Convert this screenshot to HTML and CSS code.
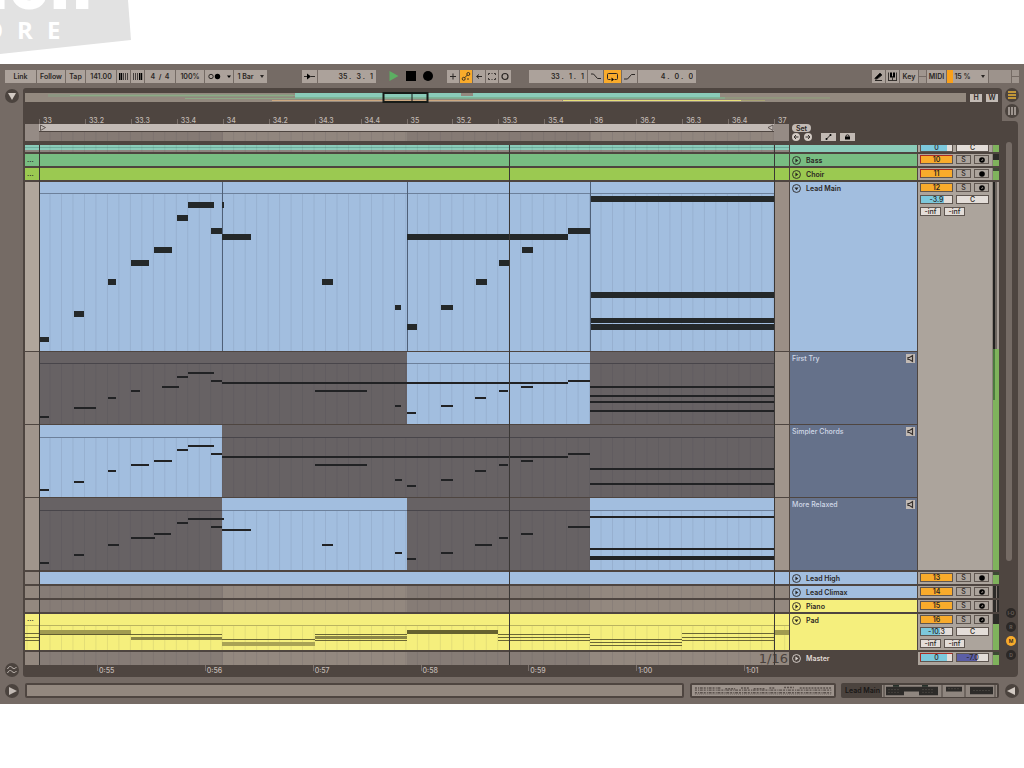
FILE: index.html
```html
<!DOCTYPE html>
<html lang="en">
<head>
<meta charset="utf-8">
<title>Arrangement</title>
<link rel="stylesheet" href="styles.css">
</head>
<body>
<svg class="defs" aria-hidden="true">
  <defs>
    <pattern id="grid" x="39" y="0" width="11.48" height="20" patternUnits="userSpaceOnUse"><rect x="10.7" width=".7" height="20" fill="#1d2433" opacity=".12"/></pattern>
    <symbol id="fold" viewBox="0 0 10 10"><circle cx="5" cy="5" r="4.4" fill="none" stroke="currentColor" stroke-width="1"/><path d="M3.800 2.700l3.200 2.300-3.200 2.300z" fill="currentColor"/></symbol>
    <symbol id="unfold" viewBox="0 0 10 10"><circle cx="5" cy="5" r="4.4" fill="none" stroke="currentColor" stroke-width="1"/><path d="M2.700 3.800h4.600L5 7z" fill="currentColor"/></symbol>
    <symbol id="rec" viewBox="0 0 8 8"><circle cx="4" cy="4" r="2.8"/></symbol>
    <symbol id="midi" viewBox="0 0 8 8"><circle cx="4" cy="4" r="2.8"/><path d="M3 4.800l1.700-1.600v1.600" stroke="#aca49c" stroke-width=".7" fill="none"/></symbol>
    <symbol id="spk" viewBox="0 0 9 9"><path d="M2 3.500h1.500L6.500 1.500v6L3.500 5.500H2z" fill="none" stroke="#38322f" stroke-width="1.200"/></symbol>
  </defs>
</svg>

<header class="brand">
  <svg class="brand-shape" viewBox="0 0 131 54" aria-hidden="true"><path d="M0 0h128l3 40L0 54z" fill="#e2e2e2"/></svg>
  <span class="brand-name">ion</span>
  <span class="brand-sub"><span>O</span><span>R</span><span>E</span></span>
</header>

<main class="app">
  <div class="toolbar">
    <div class="group">
      <button class="w31">Link</button><button class="w28">Follow</button><button class="w19">Tap</button>
      <input class="w29" aria-label="Tempo" value="141.00">
      <button class="w13" aria-label="Nudge down"><svg viewBox="0 0 13 13"><path d="M6.500 3v7M8.500 3v7M10.500 3v7" stroke="#2a2624" stroke-width=".8"/><path d="M2 3h1.500v7H2zM4 3h1.200v7H4z"/></svg></button>
      <button class="w13" aria-label="Nudge up"><svg viewBox="0 0 13 13"><path d="M2.500 3v7M4.500 3v7M6.500 3v7" stroke="#2a2624" stroke-width=".8"/><path d="M8 3h1.200v7H8zM9.700 3h1.500v7H9.700z"/></svg></button>
      <input class="w29" aria-label="Time signature" value="4  /  4"><button class="w28">100%</button>
      <button class="w28" aria-label="Metronome"><svg viewBox="0 0 28 13"><circle cx="6" cy="6.500" r="2.200" fill="none" stroke="#2a2624"/><circle cx="12.500" cy="6.500" r="2.700"/><path d="M22 5.500h4l-2 2.500z"/></svg></button>
      <button class="w33">1 Bar <i class="caret"></i></button>
    </div>
    <div class="group g-position">
      <button class="w15" aria-label="Follow song"><svg viewBox="0 0 15 13"><path d="M2 6.500h4M9 6.500h4" stroke="#2a2624"/><path d="M5 3.500l4 3-4 3z"/></svg></button>
      <input class="w58 pos" aria-label="Position" value="35 .   3 .   1">
    </div>
    <div class="transport">
      <button aria-label="Play"><svg viewBox="0 0 12 12"><path d="M1.500 1l9 5-9 5z" fill="#5cae62"/></svg></button>
      <button aria-label="Stop"><svg viewBox="0 0 12 12"><path d="M1 1h10v10H1z"/></svg></button>
      <button aria-label="Record"><svg viewBox="0 0 12 12"><circle cx="6" cy="6" r="5"/></svg></button>
    </div>
    <div class="group">
      <button class="w12" aria-label="Overdub"><svg viewBox="0 0 12 13"><path d="M3 6.500h6M6 3.500v6" stroke="#2a2624"/></svg></button>
      <button class="w12 on" aria-label="Automation arm"><svg viewBox="0 0 12 13"><g fill="none" stroke="#2a2624" stroke-width=".9"><circle cx="3.700" cy="8.800" r="1.500"/><circle cx="8.300" cy="4" r="1.500"/><path d="M4.800 7.700l2.400-2.600M7 9h2"/></g></svg></button>
      <button class="w12" aria-label="Re-enable automation"><svg viewBox="0 0 12 13"><path d="M4 6.500h5M6 4.500l-2.500 2L6 8.500" stroke="#2a2624" fill="none"/></svg></button>
      <button class="w12" aria-label="Capture"><svg viewBox="0 0 12 13"><path d="M2.500 5V3.500H4M8 3.500h1.500V5M9.500 8v1.500H8M4 9.500H2.500V8M5.500 3.500h1M5.500 9.500h1" stroke="#2a2624" fill="none" stroke-width=".9"/></svg></button>
      <button class="w12" aria-label="Session record"><svg viewBox="0 0 12 13"><circle cx="6" cy="6.500" r="3" fill="none" stroke="#2a2624" stroke-width="1.200"/></svg></button>
    </div>
    <div class="group g-loop">
      <input class="w58 pos" aria-label="Loop start" value="33 .   1 .   1">
      <button class="w15" aria-label="Punch in"><svg viewBox="0 0 15 13"><path d="M3 4h2.500l4 4.500H13" stroke="#2a2624" fill="none"/></svg></button>
      <button class="w16 on" aria-label="Loop"><svg viewBox="0 0 16 13"><path d="M6 9.500H4a1 1 0 0 1-1-1v-4a1 1 0 0 1 1-1h8a1 1 0 0 1 1 1v4a1 1 0 0 1-1 1h-2" stroke="#2a2624" fill="none"/><path d="M7 7.500v4l2.500-2z"/></svg></button>
      <button class="w15" aria-label="Punch out"><svg viewBox="0 0 15 13"><path d="M2 9h3.500l4-4.500H13" stroke="#2a2624" fill="none"/></svg></button>
      <input class="w58 pos" aria-label="Loop length" value="4 .   0 .   0">
    </div>
    <div class="group g-right">
      <button class="w13" aria-label="Draw mode"><svg viewBox="0 0 13 13"><path d="M3 8l5-5 2 2-5 4H3zM3 10.500h7" stroke="#2a2624"/></svg></button>
      <button class="w13" aria-label="Computer keyboard"><svg viewBox="0 0 13 13"><path d="M2.500 2.500v8M6.500 6v4.500M10.500 2.500v8M2 10.500h9" stroke="#2a2624" stroke-width=".9"/><path d="M4 2.500h2v5H4zM7 2.500h2v5H7z"/></svg></button>
      <button class="w17">Key</button>
      <span class="leds"><i></i><i></i></span>
      <button class="w19">MIDI</button><button class="w41 cpu">15 % <i class="caret"></i></button>
      <span class="disk"></span><span class="leds"><i></i><i></i></span>
    </div>
  </div>

  <div class="body">
    <aside class="rail">
      <button class="round" aria-label="Show browser"><svg viewBox="0 0 14 14"><path d="M3 4h8l-4 7z" fill="#d2cac3"/></svg></button>
      <button class="round" aria-label="Groove pool"><svg viewBox="0 0 14 14"><path d="M2.500 6c1.500-3 3-3 4.500-1.500S10 6 11.500 4M2.500 10c1.500-3 3-3 4.500-1.500S10 10 11.500 8" fill="none" stroke="#c2bab4"/></svg></button>
    </aside>

    <section class="panel">
      <div class="overview">
        <svg class="overview-map" viewBox="25 92 941 11" preserveAspectRatio="none" aria-hidden="true">
          <path d="M25 93h941v9H25z" fill="#93897f"/>
          <path d="M48 94h245v3H48z" fill="#8d9682"/><path d="M70 95.500h225M185 98.500h110" stroke="#8cab86"/>
          <path d="M295 93h425v4.500H295z" fill="#8acbb9"/><path d="M461 93h12v3h-12z" fill="#93897f"/>
          <path d="M295 98h430" stroke="#79b999" stroke-width="1.500"/><path d="M272 100.500h290" stroke="#cda981"/><path d="M563 100.500h178" stroke="#e8e079"/>
          <path d="M720 98h110" stroke="#8fa27c"/><path d="M741 100.500h24" stroke="#a9a474"/>
          <path d="M383.500 93h44v9h-44z" fill="none" stroke="#171b18" stroke-width="2"/><path d="M412 92v10" stroke="#171b18"/>
        </svg>
        <button>H</button><button>W</button>
      </div>

      <div class="timeline">
        <div class="ruler">
          <span>33</span><span>33.2</span><span>33.3</span><span>33.4</span><span>34</span><span>34.2</span><span>34.3</span><span>34.4</span><span>35</span><span>35.2</span><span>35.3</span><span>35.4</span><span>36</span><span>36.2</span><span>36.3</span><span>36.4</span><span>37</span>
        </div>
        <div class="scrub">
          <svg viewBox="25 124 764 17" preserveAspectRatio="none" aria-hidden="true">
            <path d="M25 124h764v17H25z" fill="#958b85"/>
            <path d="M39 132h184v9H39zM407 132h184v9H407z" fill="#857a74"/><path d="M223 132h184v9H223zM591 132h183v9H591z" fill="#91867e"/>
            <path d="M39 124h735v7H39z" fill="#c2bab5"/><path d="M39 131.500h735" stroke="#4e4540"/>
            <path d="M39 132h735v9H39z" fill="url(#grid)"/>
            <path d="M40.500 125l5 2.500-5 3zM773 125l-5 2.500 5 3z" fill="none" stroke="#4b433f" stroke-width=".8"/>
          </svg>
        </div>
        <div class="locators">
          <button class="set">Set</button>
          <div class="loc-row">
            <button class="dot" aria-label="Previous locator"><svg viewBox="0 0 8 8"><path d="M6.500 4H2M4 2L2 4l2 2" stroke="#38322f" fill="none"/></svg></button>
            <button class="dot" aria-label="Next locator"><svg viewBox="0 0 8 8"><path d="M1.500 4H6M4 2l2 2-2 2" stroke="#38322f" fill="none"/></svg></button>
            <button class="mini" aria-label="Automation mode"><svg viewBox="0 0 14 8"><path d="M5 6l4-4" stroke="#2a2624"/><circle cx="5" cy="6" r="1"/><circle cx="9" cy="2" r="1"/></svg></button>
            <button class="mini" aria-label="Lock envelopes"><svg viewBox="0 0 14 8"><path d="M4.500 3.500h5v3h-5z"/><path d="M5.500 4V2.500q1.500-1.500 3 0V4" fill="none" stroke="#2a2624"/></svg></button>
          </div>
        </div>
      </div>

      <div class="tracks">
        <div class="track cut">
          <svg class="lane" viewBox="25 145 764 7" preserveAspectRatio="none"><path d="M25 145h764v7H25z" fill="#8d857f"/><path d="M25 145h764v5H25z" fill="#8acbb9"/><path d="M25 147.500h764" stroke="#6fae9d"/><path d="M39 145h735v7H39z" fill="url(#grid)"/></svg>
          <div class="head aqua"></div>
          <div class="mixer"><div class="controls"><div class="strip"><output class="vol v88">0</output><output class="pan">C</output></div></div><div class="meter"></div></div>
        </div>

        <div class="track">
          <div class="lane clip bass">...</div>
          <div class="head bass"><button class="tog" aria-label="Unfold Bass"><svg><use href="#fold"/></svg></button>Bass</div>
          <div class="mixer"><div class="controls"><div class="strip"><button class="num auto">10</button><button class="sq">S</button><button class="sq" aria-label="Arm"><svg><use href="#midi"/></svg></button></div></div><div class="meter half"></div></div>
        </div>
        <div class="track">
          <div class="lane clip choir">...</div>
          <div class="head choir"><button class="tog" aria-label="Unfold Choir"><svg><use href="#fold"/></svg></button>Choir</div>
          <div class="mixer"><div class="controls"><div class="strip"><button class="num auto">11</button><button class="sq">S</button><button class="sq" aria-label="Arm"><svg><use href="#rec"/></svg></button></div></div><div class="meter green"></div></div>
        </div>

        <div class="track comp">
          <svg class="lane" viewBox="25 182 764 169" preserveAspectRatio="none">
            <path d="M25 182h764v169H25z" fill="#b0a69c"/><path d="M774 182h15v169h-15z" fill="#9b8f86"/>
            <path d="M39 182h735v169H39z" fill="#a2bedf"/><path d="M39 194h735v157H39z" fill="url(#grid)"/>
            <path d="M39 193.500h735" stroke="#6c809b"/><path d="M222.500 182v169M407.500 182v169M590.500 182v169" stroke="#4f6078"/>
            <path d="M39 339.500h10M74 314h10M108 282h8M131 263h18M154 250h18M177 218h11M188 205h26M211 231h11M222 205h2M222 237h29M322 282h11M395 307.500h6M407 327h10M407 237h161M568 231h22M441 307.500h12M476 282h11M499 263h10M522 250h11M591 199h183M591 295h183M591 320.500h183M591 327h183" stroke="#242829" stroke-width="5.500"/>
          </svg>
          <div class="head blue"><button class="tog" aria-label="Fold Lead Main"><svg><use href="#unfold"/></svg></button>Lead Main</div>
          <svg class="lane" viewBox="25 352 764 72" preserveAspectRatio="none">
            <path d="M25 352h764v72H25z" fill="#a0958c"/><path d="M39 352h735v72H39z" fill="#676264"/><path d="M407 352h183v72H407z" fill="#a2bedf"/>
            <path d="M39 364h735v60H39z" fill="url(#grid)"/><path d="M39 363.500h368M590 363.500h184" stroke="#48454a"/><path d="M407 363.500h183" stroke="#6c809b"/>
            <path d="M39 417h10M74 408h22M108 398h8M131 391h9M162 387h17M177 377h11M188 373h26M211 381h11M222 383h346M315 391h52M395 406h6M407 413h9M441 406h12M475 398h11M499 391h9M521 387h12M568 381h22M590 387h184M590 396h184M590 402h184M590 411h184" stroke="#212224" stroke-width="2"/>
          </svg>
          <div class="head take">First Try<button class="audition" aria-label="Audition First Try"><svg><use href="#spk"/></svg></button></div>
          <svg class="lane" viewBox="25 425 764 72" preserveAspectRatio="none">
            <path d="M25 425h764v72H25z" fill="#a0958c"/><path d="M39 425h735v72H39z" fill="#676264"/><path d="M39 425h183v72H39z" fill="#a2bedf"/>
            <path d="M39 438h735v59H39z" fill="url(#grid)"/><path d="M222 437.500h552" stroke="#48454a"/><path d="M39 437.500h183" stroke="#6c809b"/>
            <path d="M39 490h10M74 482h10M108 471h8M131 465h18M154 461h18M177 450h11M188 446h26M211 454h11M222 457h346M315 465h52M395 480h7M407 486h9M441 480h12M475 471h11M499 465h9M521 461h12M568 454h22M590 469h184M590 484h184" stroke="#212224" stroke-width="2"/>
          </svg>
          <div class="head take">Simpler Chords<button class="audition" aria-label="Audition Simpler Chords"><svg><use href="#spk"/></svg></button></div>
          <svg class="lane" viewBox="25 498 764 72" preserveAspectRatio="none">
            <path d="M25 498h764v72H25z" fill="#a0958c"/><path d="M39 498h735v72H39z" fill="#676264"/><path d="M222 498h185v72H222zM590 498h184v72H590z" fill="#a2bedf"/>
            <path d="M39 511h735v59H39z" fill="url(#grid)"/><path d="M39 510.500h183M407 510.500h183" stroke="#48454a"/><path d="M222 510.500h185M590 510.500h184" stroke="#6c809b"/>
            <path d="M39 563h10M74 555h10M108 545h11M131 538h24M154 534h17M177 523h11M188 519h36M211 527h11M222 530h29M322 545h11M395 553h7M407 559h9M441 553h12M475 545h17M499 538h9M521 534h12M568 527h22M590 517h184M590 549h184M590 557h184M590 559h184" stroke="#212224" stroke-width="2"/>
          </svg>
          <div class="head take">More Relaxed<button class="audition" aria-label="Audition More Relaxed"><svg><use href="#spk"/></svg></button></div>
          <div class="mixer"><div class="controls">
            <div class="strip"><button class="num">12</button><button class="sq">S</button><button class="sq" aria-label="Arm"><svg><use href="#midi"/></svg></button></div>
            <div class="strip"><output class="vol v72">-3.9</output><output class="pan">C</output></div>
            <div class="strip"><output class="send">-inf</output><output class="send">-inf</output></div>
          </div><div class="meter tall"></div></div>
        </div>

        <div class="track">
          <svg class="lane" viewBox="25 0 764 12" preserveAspectRatio="none"><path d="M25 0h764v12H25z" fill="#958b84"/><path d="M39 0h750v12H39z" fill="#a2bedf"/></svg>
          <div class="head blue"><button class="tog" aria-label="Unfold Lead High"><svg><use href="#fold"/></svg></button>Lead High</div>
          <div class="mixer"><div class="controls"><div class="strip"><button class="num">13</button><button class="sq">S</button><button class="sq" aria-label="Arm"><svg><use href="#rec"/></svg></button></div></div><div class="meter green"></div></div>
        </div>
        <div class="track">
          <svg class="lane" viewBox="25 0 764 12" preserveAspectRatio="none"><path d="M25 0h764v12H25z" fill="#93887f"/><path d="M39 0h184v12H39zM407 0h183v12H407z" fill="#867c76"/><path d="M39 0h735v12H39z" fill="url(#grid)"/></svg>
          <div class="head blue"><button class="tog" aria-label="Unfold Lead Climax"><svg><use href="#fold"/></svg></button>Lead Climax</div>
          <div class="mixer"><div class="controls"><div class="strip"><button class="num">14</button><button class="sq">S</button><button class="sq" aria-label="Arm"><svg><use href="#midi"/></svg></button></div></div><div class="meter off"></div></div>
        </div>
        <div class="track">
          <svg class="lane" viewBox="25 0 764 12" preserveAspectRatio="none"><path d="M25 0h764v12H25z" fill="#93887f"/><path d="M39 0h184v12H39zM407 0h183v12H407z" fill="#867c76"/><path d="M39 0h735v12H39z" fill="url(#grid)"/></svg>
          <div class="head yellow"><button class="tog" aria-label="Unfold Piano"><svg><use href="#fold"/></svg></button>Piano</div>
          <div class="mixer"><div class="controls"><div class="strip"><button class="num">15</button><button class="sq">S</button><button class="sq" aria-label="Arm"><svg><use href="#midi"/></svg></button></div></div><div class="meter off"></div></div>
        </div>
        <div class="track open">
          <div class="lane padlane">
            <svg viewBox="25 614 764 36" preserveAspectRatio="none">
              <path d="M25 614h764v36H25z" fill="#f5ef7d"/><path d="M25 626h764v24H25z" fill="url(#grid)"/><path d="M25 625.500h764" stroke="#b9b35f"/>
              <path d="M39 632.500h92M774 632.500h15" stroke="#a19b50" stroke-width="4.500"/><path d="M222 644h93" stroke="#a9a355" stroke-width="4"/><path d="M131 638.500h91M315 637.500h92" stroke="#8b8647" stroke-width="2.500"/><path d="M407 632h91" stroke="#66622f" stroke-width="4"/>
              <path d="M39 634.500h92M25 633.500h14M25 637.500h14M25 640.500h14M131 634.500h91M222 639.500h93M315 634.500h92M315 640.500h92M498 634.500h92M498 637.500h92M498 640.500h92M590 639.500h92M590 642.500h92M590 645.500h92M682 633.500h92M682 637.500h92M682 640.500h92" stroke="#5b572d" stroke-width=".9"/>
            </svg>
            <span class="cliptext">...</span>
          </div>
          <div class="head yellow"><button class="tog" aria-label="Fold Pad"><svg><use href="#unfold"/></svg></button>Pad</div>
          <div class="mixer"><div class="controls">
            <div class="strip"><button class="num">16</button><button class="sq">S</button><button class="sq" aria-label="Arm"><svg><use href="#midi"/></svg></button></div>
            <div class="strip"><output class="vol v60">-10.3</output><output class="pan">C</output></div>
            <div class="strip"><output class="send">-inf</output><output class="send">-inf</output></div>
          </div><div class="meter pad-meter"></div></div>
        </div>
        <div class="track">
          <div class="lane master-lane">
            <svg viewBox="25 0 764 13" preserveAspectRatio="none"><path d="M25 0h764v13H25z" fill="#93887f"/><path d="M39 0h184v13H39zM407 0h183v13H407z" fill="#867c76"/><path d="M39 0h735v13H39z" fill="url(#grid)"/></svg>
            <span class="gridsize">1/16</span>
          </div>
          <div class="head master"><button class="tog" aria-label="Unfold Master"><svg><use href="#fold"/></svg></button>Master</div>
          <div class="mixer"><div class="controls"><div class="strip"><output class="vol v88 auto">0</output><output class="pan cue">-7.0</output></div></div><div class="meter green"></div></div>
        </div>
        <div class="lines"><i class="edge-in"></i><i class="playhead"></i><i class="edge-out"></i></div>
      </div>
      <div class="clock"><span>0:55</span><span>0:56</span><span>0:57</span><span>0:58</span><span>0:59</span><span>1:00</span><span>1:01</span></div>
    </section>

    <aside class="side">
      <div class="views">
        <button class="round" aria-label="Arrangement view"><svg viewBox="0 0 14 14"><path d="M3 4h8M3 7h8M3 10h8" stroke="#e9b438" stroke-width="1.500"/></svg></button>
        <button class="round" aria-label="Session view"><svg viewBox="0 0 14 14"><path d="M4 3v8M7 3v8M10 3v8" stroke="#b9b0a9" stroke-width="1.500"/></svg></button>
      </div>
      <div class="side-panel">
        <div class="scrollbar"></div>
        <div class="toggles"><button>I·O</button><button>R</button><button class="lit">M</button><button>D</button></div>
      </div>
    </aside>
  </div>

  <footer class="bottom">
    <button class="round" aria-label="Show help"><svg viewBox="0 0 14 14"><path d="M4 3l8 4-8 4z" fill="#c2bab4"/></svg></button>
    <div class="status"></div>
    <svg class="preview" viewBox="0 0 145 15" preserveAspectRatio="none" aria-hidden="true">
      <path d="M3 4h27M3 7h140M3 10.500h140" stroke="#5a514c" stroke-width="2" stroke-dasharray="2 1.200 1 .8 3 1"/><path d="M34 5h10M50 4h8M63 5h12M79 4h5M94 3.500h10M110 4h32" stroke="#5a514c" stroke-width="2" stroke-dasharray="2 1"/><path d="M3 12.500h140" stroke="#68605a" stroke-dasharray="1 1"/>
    </svg>
    <div class="device">Lead Main
      <svg viewBox="0 0 115 13" preserveAspectRatio="none" aria-hidden="true"><path d="M0 0h115v13H0z" fill="#8f867f"/><path d="M4 2h18v9H4zM22 2h15v5H22zM37 2h19v9H37zM64 2h16v5H64zM88 2h23v8H88z" fill="#2d2b29"/><path d="M2 0v13M60 0v13M83 0v13M113 0v13" stroke="#49413c"/><path d="M11 1h6M40 1h6" stroke="#26302a" stroke-width="2"/><path d="M6 5h12M6 8h12M40 5h12M40 8h12M91 6h17M66 4h12" stroke="#47433e" stroke-dasharray="2 1"/></svg>
    </div>
    <button class="round" aria-label="Show detail"><svg viewBox="0 0 14 14"><path d="M10 3L2 7l8 4z" fill="#d2cac3"/></svg></button>
  </footer>
</main>
</body>
</html>
```
FILE: styles.css
```css
* { box-sizing: border-box; }
body { margin: 0; background: #fff; font: 600 7px/9px Inter, "Liberation Sans", sans-serif; color: #2a2624; }
button, input { font: inherit; color: inherit; border: 0; border-radius: 0; padding: 0; margin: 0; background: none; }
button { display: flex; align-items: center; justify-content: center; white-space: nowrap; }
svg { display: block; }
.defs { position: absolute; width: 0; height: 0; }

.brand { position: relative; height: 64px; overflow: hidden; color: #fff; }
.brand-shape { width: 131px; height: 54px; }
.brand-name { position: absolute; left: -12px; top: -47px; font: 800 64px/64px "Open Sans", sans-serif; }
.brand-sub { position: absolute; left: -16px; top: 18px; display: flex; gap: 14px; font: 700 24px/24px "Open Sans", sans-serif; }

.app { background: #756b65; }

.toolbar { display: flex; align-items: center; height: 24px; padding: 0 5px; }
.group { display: flex; gap: 1px; }
.group > button, .group > input { height: 13px; background: #aca29b; text-align: center; }
.group > button > svg { width: 100%; height: 13px; }
.group > .on { background: #f9ab2b; }
.group .pos { text-align: right; padding-right: 3px; white-space: pre; }
.g-position { margin-left: 35px; }
.g-loop { margin-left: 18px; }
.g-right { margin-left: auto; }
.transport { display: flex; gap: 5px; margin: 0 13px 0 12px; }
.transport svg { width: 12px; height: 12px; }
.w12 { width: 12px; } .w13 { width: 13px; } .w15 { width: 15px; } .w16 { width: 17px; } .w17 { width: 18px; }
.w19 { width: 19px; } .w28 { width: 28px; } .w29 { width: 30px; } .w31 { width: 31px; } .w33 { width: 33px; } .w41 { width: 41px; } .w58 { width: 58px; }
.caret { margin-left: 6px; border: 2px solid transparent; border-top: 3px solid #2a2624; border-bottom: 0; }
.group > .cpu { background: linear-gradient(90deg, #f9a01b 6px, #aca29b 6px); padding-left: 4px; }
.cpu .caret { margin-left: 10px; }
.disk { width: 22px; background: #9d938c; }
.leds { display: grid; gap: 1px; width: 7px; }
.leds i { background: #a0968f; }

.body { display: grid; grid-template-columns: 23px minmax(0, 1fr) 22px; }
.rail { display: flex; flex-direction: column; justify-content: space-between; align-items: center; padding: 1px 0 0; }
.round { width: 14px; height: 14px; border-radius: 50%; background: #4b433e; flex: none; }
.round svg { width: 14px; height: 14px; }

.panel { background: #4e4540; border-radius: 3px 4px 0 3px; padding: 4px 3px 0 2px; }
.overview { display: flex; align-items: center; gap: 4px; padding-right: 1px; }
.overview-map { flex: 1; min-width: 0; height: 11px; }
.overview button { width: 12px; height: 8px; background: #c2bab4; }

.timeline { display: grid; grid-template-columns: minmax(0, 1fr) 209px; column-gap: 1px; grid-template-rows: 21px 17px; padding-bottom: 4px; }
.ruler { display: grid; grid-template-columns: repeat(16, minmax(0, 1fr)) 15px; padding-left: 14px; align-items: end; color: #c2bab4; font-weight: 500; }
.ruler span { padding-left: 3px; border-left: 1px solid #7a706a; height: 5px; line-height: 3px; white-space: nowrap; }
.scrub { grid-row: 2; }
.scrub svg { width: 100%; height: 17px; }
.locators { grid-row: 2; grid-column: 2; padding-left: 2px; }
.set { width: 19px; height: 8px; border-radius: 4px; background: #c2bab4; }
.loc-row { display: flex; gap: 4px; margin-top: 1px; }
.loc-row svg { height: 8px; width: 100%; }
.dot { width: 8px; height: 8px; border-radius: 50%; background: #d2cac3; }
.mini { width: 15px; height: 8px; background: #c2bab4; }
.dot + .mini { margin-left: 5px; }

.tracks { position: relative; display: grid; gap: 2px; }
.track { display: grid; grid-template-columns: minmax(0, 1fr) 127px 81px; column-gap: 1px; min-height: 12px; }
.lane { width: 100%; height: 12px; }
.lane, .lane svg { shape-rendering: crispEdges; }
.lane svg { width: 100%; height: 100%; }
.cut { height: 7px; min-height: 0; overflow: hidden; }
.cut .lane { height: 7px; }
.cut .mixer, .cut .controls { height: 7px; }
.cut .controls { padding-top: 0; justify-content: end; }
.comp { grid-template-rows: 169px 72px 72px 72px; row-gap: 1px; }
.comp .lane { height: 100%; grid-column: 1; }
.comp .head { grid-column: 2; }
.comp .mixer { grid-column: 3; grid-row: 1 / 5; }
.open .lane { height: 36px; }
.clip { padding-left: 2px; line-height: 12px; }
.padlane, .master-lane { position: relative; }
.cliptext { position: absolute; left: 2px; top: 0; }
.track > .master-lane { height: 13px; }
.gridsize { position: absolute; right: 1px; bottom: 0; font: 13px/13px "DejaVu Sans", sans-serif; color: #4a423d; }

.head { display: flex; align-items: flex-start; gap: 4px; padding: 2px 2px 0; overflow: hidden; }
.tog { width: 10px; height: 9px; justify-content: flex-start; }
.tog svg { width: 9px; height: 9px; }
.aqua { background: #8acbb9; }
.bass { background: #78bd82; }
.choir { background: #9bc951; }
.blue { background: #a2bedf; }
.yellow { background: #f5ef7d; }
.take { background: #65718a; color: #d0d8e6; font-weight: 500; justify-content: space-between; }
.master { color: #e0d9d3; }
.audition { width: 9px; height: 9px; background: #c2bab4; }
.audition svg { width: 9px; height: 9px; }

.mixer { display: grid; grid-template-columns: minmax(0, 1fr) 7px; background: #aca49c; }
.controls { display: flex; flex-direction: column; gap: 3px; padding: 1px 2px 0; }
.strip { display: flex; gap: 3px; height: 9px; flex: none; }
.strip > * { height: 9px; border: 1px solid #5f5650; text-align: center; line-height: 8px; font-weight: 500; white-space: nowrap; }
.num, .vol, .pan { width: 33px; }
.num { background: #f9ab2b; }
.strip > .num { font-weight: 600; }
.auto { border-top-color: #a82c24; border-left-color: #a82c24; }
.sq { width: 15px; background: #aca49c; }
.sq svg { width: 8px; height: 8px; }
.vol { background: #e3ddd8; }
.v88 { background: linear-gradient(90deg, #7cc8dc 84%, #e3ddd8 84%); }
.v72 { background: linear-gradient(90deg, #7cc8dc 74%, #e3ddd8 74%); }
.v60 { background: linear-gradient(90deg, #7cc8dc 60%, #e3ddd8 60%); }
.pan { background: #e3ddd8; }
.cue { background: linear-gradient(90deg, #5b5ea6 66%, #e3ddd8 66%); }
.send { width: 21px; background: #e3ddd8; }
.meter { background: #7fb35c; border-left: 1px solid #8b827b; }
.green { background: linear-gradient(#3c4a34 3px, #7fb35c 3px); }
.half { background: linear-gradient(#2c2b28 6px, #7fb35c 6px); }
.pad-meter { background: linear-gradient(#2c2b28 10px, #7fb35c 10px); }
.off { background: linear-gradient(90deg, #2c2b28 3px, #857c75 3px 4px, #2c2b28 4px); }
.tall { background: linear-gradient(90deg, #232220 2px, #6d655f 2px 4px, #a59c95 4px) 0 0 / 100% 167px no-repeat, linear-gradient(90deg, #4b7a3e 2px, #7fb35c 2px) 0 0 / 100% 218px no-repeat, #7fb35c; }

.lines { position: absolute; inset: 0 210px 0 0; pointer-events: none; }
.lines i { position: absolute; top: 0; bottom: 0; width: 1px; background: #3a3735; }
.lines .edge-in { left: 1.8%; }
.lines .playhead { left: 63.3%; }
.lines .edge-out { left: 98%; }

.clock { display: grid; grid-template-columns: repeat(6, minmax(0, 1fr)) 45px; padding: 0 210px 0 72px; height: 12px; color: #c2bab4; font-weight: 500; }
.clock span { border-left: 1px solid #7a706a; height: 6px; padding: 1px 0 0 1px; }

.side { display: flex; flex-direction: column; }
.views { display: flex; flex-direction: column; align-items: center; gap: 2px; height: 33px; padding: 0 2px 3px 0; }
.side-panel { flex: 1; display: flex; flex-direction: column; gap: 47px; margin-right: 6px; padding: 21px 4px 17px; background: #4e4540; border-radius: 0 4px 4px 0; }
.scrollbar { flex: 1; width: 6px; border-radius: 3px; background: #756b65; }
.toggles { display: grid; gap: 4px; }
.toggles button { width: 10px; height: 10px; border-radius: 50%; background: #2c2826; color: #6d645e; font-size: 5px; line-height: 5px; }
.toggles .lit { background: #f9ab2b; color: #2a2624; }

.bottom { display: flex; align-items: center; height: 27px; padding: 0 5px; }
.status { flex: 1; height: 15px; margin: 0 6px; border: 2px solid #4e4540; border-radius: 2px; background: #93887f; }
.preview { width: 146px; height: 15px; border: 2px solid #4e4540; border-radius: 2px; background: #9d938c; }
.device { display: flex; align-items: center; justify-content: space-between; width: 158px; height: 15px; margin: 0 6px 0 5px; padding: 0 2px 0 4px; border-radius: 2px; background: #4b433e; color: #191716; white-space: nowrap; }
.device svg { width: 115px; height: 12px; }
```
